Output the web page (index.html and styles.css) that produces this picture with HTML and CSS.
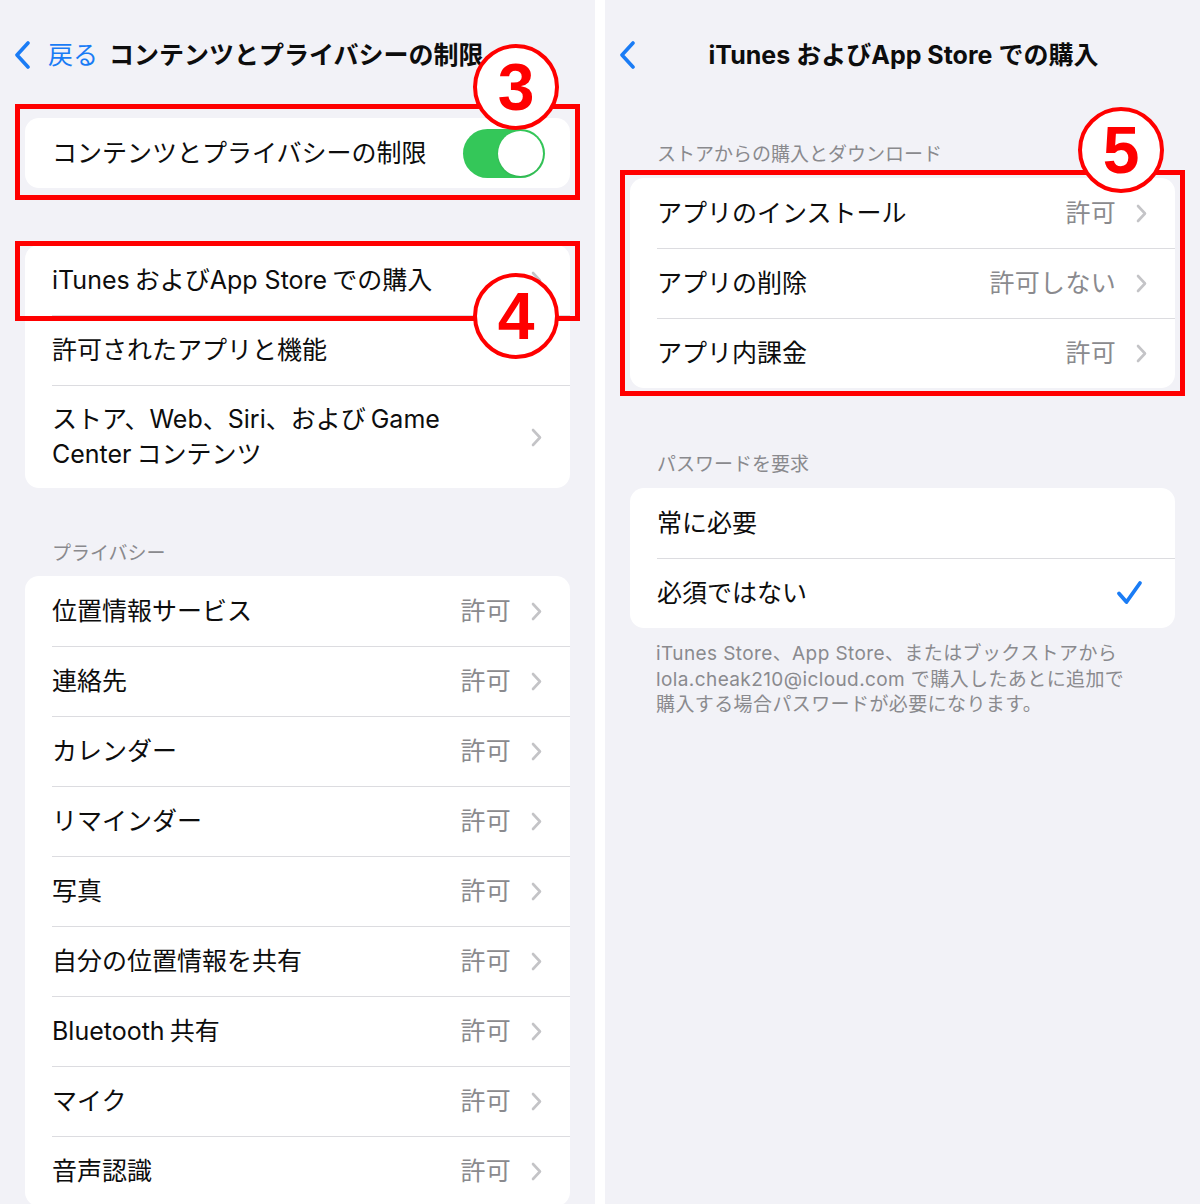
FILE: index.html
```html
<!DOCTYPE html>
<html lang="ja">
<head>
<meta charset="utf-8">
<title>iTunesおよびApp Storeでの購入</title>
<link rel="stylesheet" href="styles.css">
</head>
<body>
<div class="screen">
  <section class="panel">
    <header class="nav nav-left">
      <span class="back">
        <svg class="back-ico" width="18" height="28" viewBox="0 0 18 28"><path d="M14 2 L3 14 L14 26" fill="none" stroke="#1a7cf5" stroke-width="3.6" stroke-linecap="round" stroke-linejoin="round"/></svg>
        <span class="back-text">戻る</span>
      </span>
      <h1 class="title">コンテンツとプライバシーの制限</h1>
    </header>

    <div class="card card-first">
      <div class="row"><div class="row-inner">
        <span class="label">コンテンツとプライバシーの制限</span>
        <span class="toggle"><span class="knob"></span></span>
      </div></div>
    </div>

    <div class="card card-second">
      <div class="row"><div class="row-inner">
        <span class="label"><span class="lat">iTunes</span>および<span class="lat">App Store</span>での購入</span>
        <svg class="chev" width="11" height="19" viewBox="0 0 11 19"><path d="M2 2 L9 9.5 L2 17" fill="none" stroke="#c4c4c7" stroke-width="2.6" stroke-linecap="round" stroke-linejoin="round"/></svg>
      </div></div>
      <div class="row"><div class="row-inner sep">
        <span class="label">許可されたアプリと機能</span>
      </div></div>
      <div class="row"><div class="row-inner sep tall">
        <span class="label">ストア、Web、Siri、および<span class="lat-l">Game</span><br><span class="lat">Center</span>コンテンツ</span>
        <svg class="chev" width="11" height="19" viewBox="0 0 11 19"><path d="M2 2 L9 9.5 L2 17" fill="none" stroke="#c4c4c7" stroke-width="2.6" stroke-linecap="round" stroke-linejoin="round"/></svg>
      </div></div>
    </div>

    <div class="section-title privacy-title">プライバシー</div>

    <div class="card">
      <div class="row"><div class="row-inner"><span class="label">位置情報サービス</span><span class="value">許可</span><svg class="chev" width="11" height="19" viewBox="0 0 11 19"><path d="M2 2 L9 9.5 L2 17" fill="none" stroke="#c4c4c7" stroke-width="2.6" stroke-linecap="round" stroke-linejoin="round"/></svg></div></div>
      <div class="row"><div class="row-inner sep"><span class="label">連絡先</span><span class="value">許可</span><svg class="chev" width="11" height="19" viewBox="0 0 11 19"><path d="M2 2 L9 9.5 L2 17" fill="none" stroke="#c4c4c7" stroke-width="2.6" stroke-linecap="round" stroke-linejoin="round"/></svg></div></div>
      <div class="row"><div class="row-inner sep"><span class="label">カレンダー</span><span class="value">許可</span><svg class="chev" width="11" height="19" viewBox="0 0 11 19"><path d="M2 2 L9 9.5 L2 17" fill="none" stroke="#c4c4c7" stroke-width="2.6" stroke-linecap="round" stroke-linejoin="round"/></svg></div></div>
      <div class="row"><div class="row-inner sep"><span class="label">リマインダー</span><span class="value">許可</span><svg class="chev" width="11" height="19" viewBox="0 0 11 19"><path d="M2 2 L9 9.5 L2 17" fill="none" stroke="#c4c4c7" stroke-width="2.6" stroke-linecap="round" stroke-linejoin="round"/></svg></div></div>
      <div class="row"><div class="row-inner sep"><span class="label">写真</span><span class="value">許可</span><svg class="chev" width="11" height="19" viewBox="0 0 11 19"><path d="M2 2 L9 9.5 L2 17" fill="none" stroke="#c4c4c7" stroke-width="2.6" stroke-linecap="round" stroke-linejoin="round"/></svg></div></div>
      <div class="row"><div class="row-inner sep"><span class="label">自分の位置情報を共有</span><span class="value">許可</span><svg class="chev" width="11" height="19" viewBox="0 0 11 19"><path d="M2 2 L9 9.5 L2 17" fill="none" stroke="#c4c4c7" stroke-width="2.6" stroke-linecap="round" stroke-linejoin="round"/></svg></div></div>
      <div class="row"><div class="row-inner sep"><span class="label"><span class="lat">Bluetooth</span>共有</span><span class="value">許可</span><svg class="chev" width="11" height="19" viewBox="0 0 11 19"><path d="M2 2 L9 9.5 L2 17" fill="none" stroke="#c4c4c7" stroke-width="2.6" stroke-linecap="round" stroke-linejoin="round"/></svg></div></div>
      <div class="row"><div class="row-inner sep"><span class="label">マイク</span><span class="value">許可</span><svg class="chev" width="11" height="19" viewBox="0 0 11 19"><path d="M2 2 L9 9.5 L2 17" fill="none" stroke="#c4c4c7" stroke-width="2.6" stroke-linecap="round" stroke-linejoin="round"/></svg></div></div>
      <div class="row"><div class="row-inner sep"><span class="label">音声認識</span><span class="value">許可</span><svg class="chev" width="11" height="19" viewBox="0 0 11 19"><path d="M2 2 L9 9.5 L2 17" fill="none" stroke="#c4c4c7" stroke-width="2.6" stroke-linecap="round" stroke-linejoin="round"/></svg></div></div>
    </div>

    <div class="mark mark-3"></div>
    <div class="mark mark-4"></div>
    <div class="badge badge-3">3</div>
    <div class="badge badge-4">4</div>
  </section>

  <div class="divider"></div>

  <section class="panel">
    <header class="nav nav-right">
      <svg class="back-ico back-abs" width="18" height="28" viewBox="0 0 18 28"><path d="M14 2 L3 14 L14 26" fill="none" stroke="#1a7cf5" stroke-width="3.6" stroke-linecap="round" stroke-linejoin="round"/></svg>
      <h1 class="title"><span class="lat">iTunes</span>および<span class="lat">App Store</span>での購入</h1>
    </header>

    <div class="section-title store-title">ストアからの購入とダウンロード</div>
    <div class="card">
      <div class="row"><div class="row-inner"><span class="label">アプリのインストール</span><span class="value">許可</span><svg class="chev" width="11" height="19" viewBox="0 0 11 19"><path d="M2 2 L9 9.5 L2 17" fill="none" stroke="#c4c4c7" stroke-width="2.6" stroke-linecap="round" stroke-linejoin="round"/></svg></div></div>
      <div class="row"><div class="row-inner sep"><span class="label">アプリの削除</span><span class="value">許可しない</span><svg class="chev" width="11" height="19" viewBox="0 0 11 19"><path d="M2 2 L9 9.5 L2 17" fill="none" stroke="#c4c4c7" stroke-width="2.6" stroke-linecap="round" stroke-linejoin="round"/></svg></div></div>
      <div class="row"><div class="row-inner sep"><span class="label">アプリ内課金</span><span class="value">許可</span><svg class="chev" width="11" height="19" viewBox="0 0 11 19"><path d="M2 2 L9 9.5 L2 17" fill="none" stroke="#c4c4c7" stroke-width="2.6" stroke-linecap="round" stroke-linejoin="round"/></svg></div></div>
    </div>

    <div class="section-title password-title">パスワードを要求</div>
    <div class="card">
      <div class="row"><div class="row-inner"><span class="label">常に必要</span></div></div>
      <div class="row"><div class="row-inner sep"><span class="label">必須ではない</span>
        <svg class="check" width="28" height="26" viewBox="0 0 28 26"><path d="M3 13.5 L10.5 22 L24 3" fill="none" stroke="#1a7cf5" stroke-width="3.8" stroke-linecap="round" stroke-linejoin="round"/></svg>
      </div></div>
    </div>
    <p class="footnote">iTunes Store、App Store、またはブックストアから<br>lola.cheak210@icloud.com で購入したあとに追加で<br>購入する場合パスワードが必要になります。</p>

    <div class="mark mark-5"></div>
    <div class="badge badge-5">5</div>
  </section>
</div>
</body>
</html>
```

FILE: styles.css
```css
* { box-sizing: border-box; }

html, body {
  margin: 0;
  padding: 0;
  background: #ffffff;
}

body {
  font-family: Inter, "Noto Sans CJK JP", sans-serif;
  color: #0d0d0d;
}

.screen {
  display: flex;
  width: 1200px;
  height: 1204px;
  overflow: hidden;
}

.panel {
  position: relative;
  width: 595px;
  height: 1204px;
  background: #f2f2f7;
  overflow: hidden;
  padding: 30px 25px 0 25px;
}

.divider {
  width: 10px;
  background: #ffffff;
}

.nav {
  height: 50px;
  display: flex;
  align-items: center;
  margin: 0 -25px;
}

.nav-left {
  padding-left: 14px;
}

.back {
  display: flex;
  align-items: center;
  color: #1a7cf5;
}

.back-ico {
  display: block;
}

.back-text {
  font-size: 25px;
  margin-left: 16px;
  line-height: 1;
}

.title {
  margin: 0;
  font-size: 25px;
  font-weight: 700;
  line-height: 1;
  color: #0d0d0d;
  white-space: nowrap;
}

.nav-left .title {
  margin-left: 11px;
}

.nav-right {
  justify-content: center;
  position: relative;
}

.nav-right .title {
  margin-left: 2px;
}

.back-abs {
  position: absolute;
  left: 14px;
  top: 11px;
}

.lat {
  margin-right: 5px;
}

.lat-l {
  margin-left: 5px;
}

.title .lat {
  margin-right: 6px;
}

.card {
  background: #ffffff;
  border-radius: 14px;
  overflow: hidden;
}

.card-first {
  margin-top: 38px;
}

.card-second {
  margin-top: 57px;
}

.row {
  padding-left: 27px;
}

.row-inner {
  display: flex;
  align-items: center;
  height: 70px;
  padding-right: 28px;
  font-size: 25px;
  line-height: 35px;
}

.row-inner.sep {
  border-top: 1px solid #dcdce0;
  height: 70px;
}

.row-inner.tall {
  height: 103px;
}

.label {
  flex: 1;
  line-height: 35px;
  color: #0d0d0d;
  white-space: nowrap;
}

.value {
  color: #8a8a8e;
  margin-right: 20px;
  line-height: 35px;
  letter-spacing: 0.3px;
}

.chev {
  display: block;
  flex: none;
}

.check {
  display: block;
  margin-right: 3px;
  margin-top: -2px;
}

.toggle {
  position: relative;
  width: 82px;
  height: 49px;
  border-radius: 25px;
  background: #34c759;
  margin-right: -3px;
  flex: none;
}

.knob {
  position: absolute;
  top: 2px;
  right: 2px;
  width: 45px;
  height: 45px;
  border-radius: 50%;
  background: #ffffff;
  box-shadow: 0 1px 2px rgba(0, 0, 0, 0.12);
}

.section-title {
  font-size: 19px;
  line-height: 26px;
  color: #8a8a8e;
  padding-left: 27px;
}

.privacy-title {
  margin-top: 53px;
  margin-bottom: 9px;
}

.store-title {
  margin-top: 62px;
  margin-bottom: 10px;
}

.password-title {
  margin-top: 64px;
  margin-bottom: 10px;
}

.footnote {
  margin: 13px 0 0 0;
  padding-left: 26px;
  font-size: 19px;
  line-height: 25.5px;
  color: #8a8a8e;
  white-space: nowrap;
  letter-spacing: 0.4px;
}

/* annotation overlays */
.mark {
  position: absolute;
  border: 5px solid #ff0000;
}

.mark-3 {
  left: 15px;
  top: 104px;
  width: 565px;
  height: 96px;
}

.mark-4 {
  left: 15px;
  top: 241px;
  width: 565px;
  height: 80px;
}

.mark-5 {
  left: 15px;
  top: 170px;
  width: 565px;
  height: 226px;
}

.badge {
  position: absolute;
  width: 86px;
  height: 86px;
  border-radius: 50%;
  border: 4px solid #ff0000;
  background: #ffffff;
  color: #ff0000;
  font-family: "Liberation Sans", Arial, sans-serif;
  font-weight: 700;
  font-size: 66px;
  line-height: 78px;
  text-align: center;
}

.badge-3 {
  left: 473px;
  top: 44px;
}

.badge-4 {
  left: 473px;
  top: 273px;
}

.badge-5 {
  left: 473px;
  top: 107px;
}
```
